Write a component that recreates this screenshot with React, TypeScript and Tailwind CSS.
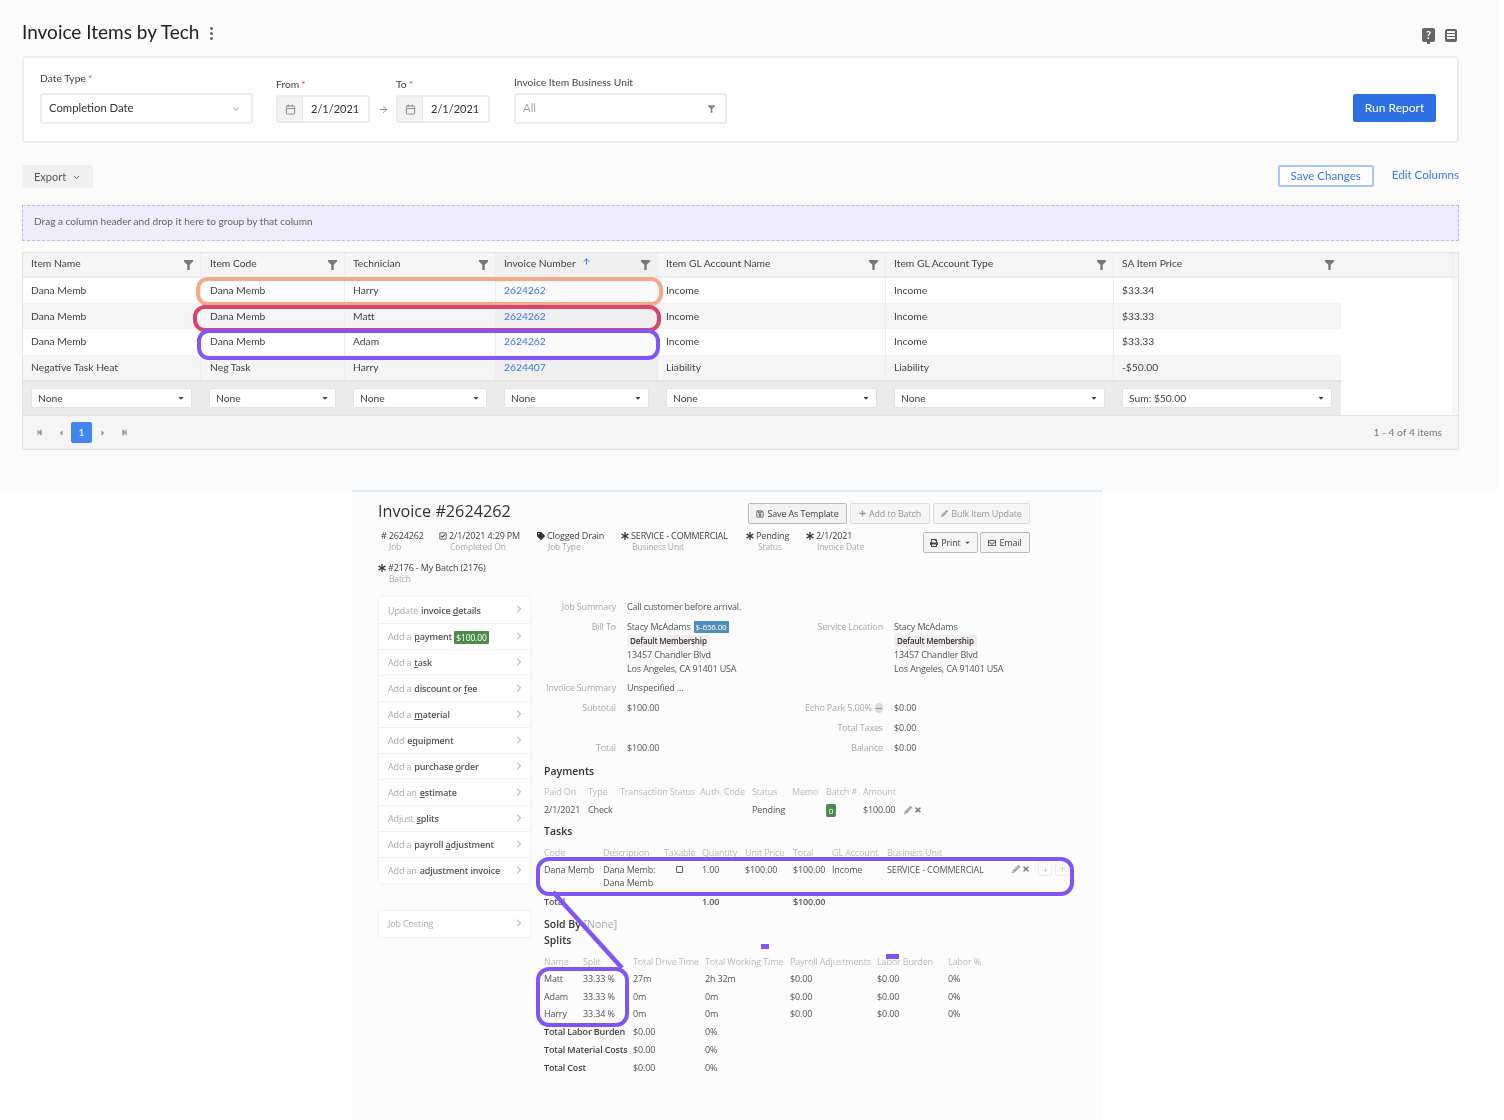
import { Calendar, ChevronDown, ChevronRight, ArrowRight, ArrowUp, ArrowDown } from 'lucide-react';
import {
  FaAsterisk,
  FaTag,
  FaRegCheckSquare,
  FaPrint,
  FaRegEnvelope,
  FaPencilAlt,
  FaTimes,
  FaRegSave,
  FaPlus,
  FaCaretDown,
  FaStepBackward,
  FaStepForward,
  FaCaretLeft,
  FaCaretRight,
} from 'react-icons/fa';
import type { ReactNode } from 'react';

const gridCols = 'grid grid-cols-[178px_144px_151px_162px_228px_228px_227px]';

const columns = [
  'Item Name',
  'Item Code',
  'Technician',
  'Invoice Number',
  'Item GL Account Name',
  'Item GL Account Type',
  'SA Item Price',
];

const rows = [
  ['Dana Memb', 'Dana Memb', 'Harry', '2624262', 'Income', 'Income', '$33.34'],
  ['Dana Memb', 'Dana Memb', 'Matt', '2624262', 'Income', 'Income', '$33.33'],
  ['Dana Memb', 'Dana Memb', 'Adam', '2624262', 'Income', 'Income', '$33.33'],
  ['Negative Task Heat', 'Neg Task', 'Harry', '2624407', 'Liability', 'Liability', '-$50.00'],
];

const footerSelects = ['None', 'None', 'None', 'None', 'None', 'None', 'Sum: $50.00'];

function FilterIcon({ className }: { className?: string }) {
  return (
    <svg viewBox="0 0 10 11" className={className} fill="currentColor">
      <path d="M0 0h10v1.6L6.3 5.2V11H3.7V5.2L0 1.6z" />
    </svg>
  );
}

function Req() {
  return <span className="text-[#e5484d] ml-[2px]">*</span>;
}

function DateField({ value }: { value: string }) {
  return (
    <div className="flex w-[94px] h-[28px] mb-[1px] bg-white border-2 border-[#ececec] rounded-[3px] text-[#333]">
      <div className="w-[25px] bg-[#f3f3f3] border-r border-[#e6e6e6] flex items-center justify-center">
        <Calendar className="w-[11px] h-[11px] text-[#888]" />
      </div>
      <div className="flex-1 flex items-center pl-[8px] text-[11px]">{value}</div>
    </div>
  );
}

function Grid() {
  return (
    <div className="mt-[11px] h-[198px] border border-[#e4e4e4] flex flex-col bg-white text-[10.3px] text-[#444] font-['Lato',sans-serif]">
      {/* Header */}
      <div className="flex h-[25px] bg-[#f5f5f5] border-b-2 border-[#ececec]">
        <div className={`${gridCols} w-[1318px]`}>
          {columns.map((c, i) => (
            <div
              key={c}
              className={`relative flex items-center pb-[1px] ${i === 1 ? 'pl-[9px]' : 'pl-[8px]'} ${i < 6 ? 'border-r border-[#ececec]' : ''} ${i === 3 ? 'bg-[#f0f0f0]' : ''}`}
            >
              {c}
              {i === 3 && <ArrowUp className="w-[9px] h-[9px] text-[#3b78e7] ml-[6px] mb-[4px]" strokeWidth={2.5} />}
              <FilterIcon className="absolute right-[7px] top-[7px] w-[9px] h-[10px] text-[#777]" />
            </div>
          ))}
        </div>
        <div className="flex-1 border-r border-[#ececec] mr-[5px]" />
      </div>

      <div className="flex flex-1">
        <div className="w-[1318px]">
          {rows.map((r, ri) => (
            <div key={ri} className={`${gridCols} h-[25.6px] ${ri % 2 === 1 ? 'bg-[#f5f5f5]' : 'bg-white'}`}>
              {r.map((v, i) => (
                <div
                  key={i}
                  className={`flex items-center ${i === 1 ? 'pl-[9px]' : 'pl-[8px]'} ${i < 6 ? 'border-r border-[#ededed]' : ''} ${i === 3 ? 'text-[#3b78e7]' : ''} ${
                    i === 3 ? (ri % 2 === 1 ? 'bg-[#efefef]' : 'bg-[#fafafa]') : ''
                  }`}
                >
                  {v}
                </div>
              ))}
            </div>
          ))}
          {/* Group footer */}
          <div className={`${gridCols} h-[35px] bg-[#ebebeb] border-t-2 border-[#e4e4e4]`}>
            {footerSelects.map((s, i) => (
              <div key={i} className="flex items-center pl-[8px] pr-[9px] pb-[1px]">
                <div className="flex-1 h-[20px] bg-white border border-[#e2e2e2] rounded-[2px] flex items-center justify-between px-[6px]">
                  {s}
                  <FaCaretDown className="w-[8px] h-[8px] text-[#444]" />
                </div>
              </div>
            ))}
          </div>
        </div>
        <div className="flex-1 bg-white" />
        <div className="w-[6px] bg-[#f7f7f7]" />
      </div>

      {/* Pager */}
      <div className="h-[34px] bg-[#f5f5f5] border-t border-[#e4e4e4] flex items-center pl-[13px] pr-[16px] text-[#777]">
        <FaStepBackward className="w-[7px] h-[7px] text-[#999]" />
        <FaCaretLeft className="w-[8px] h-[8px] text-[#999] ml-[14px]" />
        <div className="w-[21px] h-[21px] ml-[6px] rounded-[2px] bg-[#4285f0] text-white flex items-center justify-center">1</div>
        <FaCaretRight className="w-[8px] h-[8px] text-[#999] ml-[7px]" />
        <FaStepForward className="w-[7px] h-[7px] text-[#999] ml-[14px]" />
        <span className="ml-auto">1 - 4 of 4 items</span>
      </div>
    </div>
  );
}

function Meta({ icon, value, label, w, indent }: { icon: ReactNode; value: string; label: string; w: string; indent: string }) {
  return (
    <div className={w}>
      <div className="flex items-center gap-[2px] h-[11px] leading-[11px] whitespace-nowrap text-[#444]">
        {icon}
        {value}
      </div>
      <div className={`h-[11px] leading-[11px] text-[8.5px] text-[#aaa] whitespace-nowrap ${indent}`}>{label}</div>
    </div>
  );
}

const star = <FaAsterisk className="w-[8px] h-[8px] text-[#333]" />;

const actions: [string, ReactNode][] = [
  ['Update', <>invoice <u>d</u>etails</>],
  ['Add a', <><u>p</u>ayment</>],
  ['Add a', <><u>t</u>ask</>],
  ['Add a', <>discount or <u>f</u>ee</>],
  ['Add a', <><u>m</u>aterial</>],
  ['Add', <>e<u>q</u>uipment</>],
  ['Add a', <>purchase <u>o</u>rder</>],
  ['Add an', <><u>e</u>stimate</>],
  ['Adjust', <><u>s</u>plits</>],
  ['Add a', <>payroll <u>a</u>djustment</>],
  ['Add an', <>adjustment invoice</>],
];

function Sidebar() {
  return (
    <div className="w-[151px] shrink-0">
      <div className="bg-white rounded-[3px] shadow-[0_0_3px_rgba(0,0,0,0.12)]">
        {actions.map(([a, b], i) => (
          <div key={i} className={`h-[26px] flex items-center pl-[9px] pr-[5px] whitespace-nowrap ${i > 0 ? 'border-t border-[#f2f2f2]' : ''}`}>
            <span className="text-[#aaa] mr-[3px] pt-[1px]">{a}</span>
            <span className="text-[#555] font-semibold pt-[1px]">{b}</span>
            {i === 1 && (
              <span className="ml-[2px] mt-[1px] w-[35px] text-center h-[13px] leading-[13px] bg-[#4d8b4d] text-white text-[8.5px] rounded-[1px]">$100.00</span>
            )}
            <ChevronRight className="ml-auto w-[12px] h-[12px] text-[#999] mb-[2px]" strokeWidth={2} />
          </div>
        ))}
      </div>
      <div className="mt-[28px] h-[26px] bg-white rounded-[3px] shadow-[0_0_3px_rgba(0,0,0,0.12)] flex items-center pl-[9px] pr-[5px] text-[#aaa]">
        Job Costing
        <ChevronRight className="ml-auto w-[12px] h-[12px] text-[#999] mb-[2px]" strokeWidth={2} />
      </div>
    </div>
  );
}

function InfoRow({ label, value, label2, value2 }: { label?: string; value?: ReactNode; label2?: ReactNode; value2?: ReactNode }) {
  return (
    <div className="flex h-[20px] items-center whitespace-nowrap">
      <div className="w-[72px] text-right text-[#aaa]">{label}</div>
      <div className="w-[178px] ml-[11px] text-[#555]">{value}</div>
      <div className="w-[78px] flex justify-end items-center text-[#aaa]">{label2}</div>
      <div className="ml-[11px] text-[#555]">{value2}</div>
    </div>
  );
}

function MembershipBadge() {
  return <span className="inline-block h-[12px] leading-[12px] px-[3px] bg-[#f3eded] text-[#333] font-semibold text-[8px] rounded-[1px]">Default Membership</span>;
}

const paymentCols = 'grid grid-cols-[44px_32px_80px_52px_40px_34px_37px_40px_auto]';
const taskCols = 'grid grid-cols-[59px_61px_38px_43px_48px_39px_55px_125px_auto]';
const splitCols = 'grid grid-cols-[39px_50px_72px_85px_87px_71px_auto]';
const headingClass = 'h-[14px] leading-[14px] text-[10.5px] tracking-normal font-semibold text-[#333]';

const splitRows = [
  ['Matt', '33.33 %', '27m', '2h 32m', '$0.00', '$0.00', '0%'],
  ['Adam', '33.33 %', '0m', '0m', '$0.00', '$0.00', '0%'],
  ['Harry', '33.34 %', '0m', '0m', '$0.00', '$0.00', '0%'],
];

const totals = [
  ['Total Labor Burden', '$0.00', '0%'],
  ['Total Material Costs', '$0.00', '0%'],
  ['Total Cost', '$0.00', '0%'],
];

function Details() {
  return (
    <div className="ml-[14px] flex-1 text-[#555]">
      <InfoRow label="Job Summary" value="Call customer before arrival." />
      <div className="flex h-[61px] pt-[3px] leading-[14px] whitespace-nowrap">
        <div className="w-[72px] text-right text-[#aaa]">Bill To</div>
        <div className="w-[178px] ml-[11px]">
          <div className="flex items-center gap-[3px] h-[14px]">
            Stacy McAdams
            <span className="w-[35px] text-center h-[12px] leading-[12px] bg-[#4f8fba] text-white text-[8px] rounded-[1px]">$-656.00</span>
          </div>
          <div className="h-[14px] flex items-center"><MembershipBadge /></div>
          <div>13457 Chandler Blvd</div>
          <div>Los Angeles, CA 91401 USA</div>
        </div>
        <div className="w-[78px] text-right text-[#aaa]">Service Location</div>
        <div className="ml-[11px]">
          <div>Stacy McAdams</div>
          <div className="h-[14px] flex items-center"><MembershipBadge /></div>
          <div>13457 Chandler Blvd</div>
          <div>Los Angeles, CA 91401 USA</div>
        </div>
      </div>
      <InfoRow label="Invoice Summary" value="Unspecified ..." />
      <InfoRow
        label="Subtotal"
        value="$100.00"
        label2={
          <>
            Echo Park 5.00%
            <span className="ml-[3px] w-[10px] h-[10px] rounded-full bg-[#d5dde3] text-[#555] text-[7px] leading-[8px] text-center font-bold">...</span>
          </>
        }
        value2="$0.00"
      />
      <InfoRow label2="Total Taxes" value2="$0.00" />
      <InfoRow label="Total" value="$100.00" label2="Balance" value2="$0.00" />

      <div className={`mt-[6px] ${headingClass}`}>Payments</div>
      <div className={`${paymentCols} mt-[5px] h-[18px] items-center text-[#bbb] whitespace-nowrap`}>
        {['Paid On', 'Type', 'Transaction Status', 'Auth. Code', 'Status', 'Memo', 'Batch #', 'Amount'].map((c) => (
          <div key={c}>{c}</div>
        ))}
      </div>
      <div className={`${paymentCols} h-[18px] items-center whitespace-nowrap`}>
        <div>2/1/2021</div>
        <div>Check</div>
        <div />
        <div />
        <div>Pending</div>
        <div />
        <div>
          <span className="block w-[10px] h-[13px] leading-[13px] text-center bg-[#4d8b4d] text-white text-[8px] rounded-[2px]">0</span>
        </div>
        <div className="col-span-2 flex items-center">
          $100.00
          <FaPencilAlt className="w-[8px] h-[8px] text-[#999] ml-[9px]" />
          <FaTimes className="w-[8px] h-[8px] text-[#777] ml-[2px]" />
        </div>
      </div>

      <div className={`mt-[5px] ${headingClass}`}>Tasks</div>
      <div className={`${taskCols} mt-[6px] h-[18px] items-center text-[#bbb] whitespace-nowrap`}>
        {['Code', 'Description', 'Taxable', 'Quantity', 'Unit Price', 'Total', 'GL Account', 'Business Unit'].map((c) => (
          <div key={c}>{c}</div>
        ))}
      </div>
      <div className={`${taskCols} h-[31px] pt-[1px] leading-[13px] whitespace-nowrap`}>
        <div>Dana Memb</div>
        <div>Dana Memb:<br />Dana Memb</div>
        <div className="pl-[12px] pt-[3px]">
          <span className="block w-[7px] h-[7px] border border-[#666] rounded-[1px]" />
        </div>
        <div>1.00</div>
        <div>$100.00</div>
        <div>$100.00</div>
        <div>Income</div>
        <div>SERVICE - COMMERCIAL</div>
        <div className="flex items-start pt-[2px]">
          <FaPencilAlt className="w-[8px] h-[8px] text-[#999]" />
          <FaTimes className="w-[8px] h-[8px] text-[#777] ml-[2px]" />
          <span className="ml-[8px] -mt-[3px] w-[14px] h-[14px] border border-[#eee] rounded-[2px] flex items-center justify-center">
            <ArrowDown className="w-[7px] h-[7px] text-[#bbb]" />
          </span>
          <span className="ml-[3px] -mt-[3px] w-[14px] h-[14px] border border-[#eee] rounded-[2px] flex items-center justify-center">
            <ArrowUp className="w-[7px] h-[7px] text-[#bbb]" />
          </span>
        </div>
      </div>
      <div className={`${taskCols} h-[18px] items-center font-semibold`}>
        <div>Total</div>
        <div />
        <div />
        <div>1.00</div>
        <div />
        <div>$100.00</div>
      </div>

      <div className={`mt-[6px] ${headingClass}`}>
        Sold By <span className="font-normal text-[#aaa]">[None]</span>
      </div>
      <div className={`mt-[2px] ${headingClass}`}>Splits</div>
      <div className={`${splitCols} mt-[6px] h-[17px] items-center text-[#bbb] whitespace-nowrap`}>
        {['Name', 'Split', 'Total Drive Time', 'Total Working Time', 'Payroll Adjustments', 'Labor Burden', 'Labor %'].map((c) => (
          <div key={c}>{c}</div>
        ))}
      </div>
      {splitRows.map((r) => (
        <div key={r[0]} className={`${splitCols} h-[17.7px] items-center whitespace-nowrap`}>
          {r.map((v, i) => (
            <div key={i}>{v}</div>
          ))}
        </div>
      ))}
      {totals.map((r) => (
        <div key={r[0]} className="flex h-[17.7px] items-center whitespace-nowrap">
          <div className="w-[89px] font-semibold text-[#444]">{r[0]}</div>
          <div className="w-[72px]">{r[1]}</div>
          <div>{r[2]}</div>
        </div>
      ))}
    </div>
  );
}

function InvoicePanel() {
  return (
    <div className="w-[750px] h-[630px] ml-[352px] bg-[#fcfcfc] border-t-2 border-[#dcebf8] pl-[26px] pr-[72px] pt-[11px] font-['Open_Sans',sans-serif] text-[9px] tracking-[-0.15px]">
      <div className="flex items-center justify-between h-[21px]">
        <h1 className="text-[16.2px] tracking-normal font-medium text-[#333] mb-[5px]">Invoice #2624262</h1>
        <div className="flex gap-[3px]">
          <button className="w-[99px] h-[21px] flex items-center justify-center gap-[3px] border border-[#bbb] rounded-[2px] bg-[#f2f2f2] text-[#444]">
            <FaRegSave className="w-[8px] h-[8px]" /> Save As Template
          </button>
          <button className="w-[80px] h-[21px] flex items-center justify-center gap-[3px] border border-[#ddd] rounded-[2px] bg-[#f5f5f5] text-[#999]">
            <FaPlus className="w-[7px] h-[7px]" /> Add to Batch
          </button>
          <button className="w-[97px] h-[21px] flex items-center justify-center gap-[3px] border border-[#ddd] rounded-[2px] bg-[#f5f5f5] text-[#999]">
            <FaPencilAlt className="w-[7px] h-[7px]" /> Bulk Item Update
          </button>
        </div>
      </div>

      <div className="flex justify-between mt-[6px]">
        <div className="flex pl-[3px]">
          <Meta w="w-[58px]" indent="pl-[8px]" icon={<span className="text-[#333]">#</span>} value="2624262" label="Job" />
          <Meta w="w-[98px]" indent="pl-[11px]" icon={<FaRegCheckSquare className="w-[8px] h-[8px] text-[#333]" />} value="2/1/2021 4:29 PM" label="Completed On" />
          <Meta w="w-[84px]" indent="pl-[11px]" icon={<FaTag className="w-[8px] h-[8px] text-[#333]" />} value="Clogged Drain" label="Job Type" />
          <Meta w="w-[125px]" indent="pl-[11px]" icon={star} value="SERVICE - COMMERCIAL" label="Business Unit" />
          <Meta w="w-[60px]" indent="pl-[12px]" icon={star} value="Pending" label="Status" />
          <Meta w="w-[60px]" indent="pl-[11px]" icon={star} value="2/1/2021" label="Invoice Date" />
        </div>
        <div className="flex gap-[2px] mt-[2px] text-[#444]">
          <button className="w-[55px] h-[21px] flex items-center justify-center gap-[3px] border border-[#bbb] rounded-[2px] bg-[#f5f5f5]">
            <FaPrint className="w-[8px] h-[8px]" /> Print
            <FaCaretDown className="w-[7px] h-[7px]" />
          </button>
          <button className="w-[50px] h-[21px] flex items-center justify-center gap-[3px] border border-[#bbb] rounded-[2px] bg-[#f5f5f5]">
            <FaRegEnvelope className="w-[8px] h-[8px]" /> Email
          </button>
        </div>
      </div>

      <div className="mt-[9px]">
        <Meta w="w-[150px]" indent="pl-[11px]" icon={star} value="#2176 - My Batch (2176)" label="Batch" />
      </div>

      <div className="flex mt-[13px] pl-[1px]">
        <Sidebar />
        <Details />
      </div>
    </div>
  );
}

export default function App() {
  return (
    <div className="relative w-[1504px] h-[1120px] bg-white overflow-hidden blur-[0.4px]">
      {/* Report */}
      <div className="w-[1499px] h-[490px] bg-[#fbfbfc] pl-[22px] pr-[40px] font-['Lato',sans-serif]">
        <div className="h-[54px] pt-[10px] mb-[2px] flex items-center">
          <h1 className="text-[19px] text-[#222]">Invoice Items by Tech</h1>
          <div className="ml-[11px] flex flex-col gap-[2px] mt-[2px]">
            <span className="w-[3px] h-[3px] rounded-full bg-[#666]" />
            <span className="w-[3px] h-[3px] rounded-full bg-[#666]" />
            <span className="w-[3px] h-[3px] rounded-full bg-[#666]" />
          </div>
          <div className="ml-auto flex items-center gap-[10px] mr-[2px] mt-[6px]">
            <span className="relative w-[13px] h-[14px] bg-[#666] rounded-[2px] text-white text-[11px] font-bold leading-[14px] text-center">
              ?
              <span className="absolute left-[5px] -bottom-[2px] w-[3px] h-[3px] bg-[#666]" />
            </span>
            <span className="w-[12px] h-[13px] bg-[#666] rounded-[2px] flex flex-col items-center justify-center gap-[1px]">
              <span className="w-[8px] h-[2px] bg-white" />
              <span className="w-[8px] h-[2px] bg-white" />
              <span className="w-[8px] h-[2px] bg-white" />
            </span>
          </div>
        </div>

        {/* Filters */}
        <div className="h-[87px] bg-white border-2 border-[#eeeeee] rounded-[4px] pl-[16px] pr-[21px] pb-[17px] flex items-end text-[10.3px] text-[#444]">
          <div className="w-[213px]">
            <div className="mb-[7px]">Date Type<Req /></div>
            <div className="h-[31px] border-2 border-[#ececec] rounded-[3px] flex items-center justify-between pl-[7px] pr-[10px] text-[11.3px] text-[#333]">
              Completion Date
              <ChevronDown className="w-[10px] h-[10px] text-[#888]" />
            </div>
          </div>
          <div className="ml-[23px]">
            <div className="mb-[3px]">From<Req /></div>
            <DateField value="2/1/2021" />
          </div>
          <div className="w-[26px] h-[29px] flex items-center justify-center">
            <ArrowRight className="w-[11px] h-[11px] text-[#888]" />
          </div>
          <div>
            <div className="mb-[3px]">To<Req /></div>
            <DateField value="2/1/2021" />
          </div>
          <div className="ml-[24px] w-[213px]">
            <div className="mb-[3px]">Invoice Item Business Unit</div>
            <div className="h-[31px] border-2 border-[#ececec] rounded-[3px] flex items-center justify-between pl-[7px] pr-[10px] text-[11.3px] text-[#aaa]">
              All
              <FilterIcon className="w-[7px] h-[8px] text-[#888]" />
            </div>
          </div>
          <button className="ml-auto mb-[2px] w-[83px] h-[28px] bg-[#2f6fe4] rounded-[2px] text-white text-[12px]">Run Report</button>
        </div>

        {/* Toolbar */}
        <div className="mt-[22px] h-[23px] flex items-center text-[11.6px]">
          <button className="w-[71px] h-[23px] bg-[#f0f0f0] rounded-[2px] text-[#555] text-[11px] flex items-center justify-center gap-[6px] pt-[1px]">
            Export <ChevronDown className="w-[9px] h-[9px]" strokeWidth={2.5} />
          </button>
          <button className="ml-auto w-[96px] h-[22px] bg-white border-2 border-[#aac6f6] rounded-[2px] text-[#3b78e7] pb-[1px] mb-[1px]">Save Changes</button>
          <span className="ml-[18px] text-[#3b78e7] mb-[3px]">Edit Columns</span>
        </div>

        <div className="mt-[17px] h-[36px] bg-[#efecfd] border border-dashed border-[#c4b6f2] flex items-center pl-[11px] pb-[2px] text-[10.1px] text-[#666]">
          Drag a column header and drop it here to group by that column
        </div>

        <Grid />
      </div>

      <InvoicePanel />

      {/* Highlights drawn over the report */}
      <div className="absolute left-[196px] top-[277px] w-[467px] h-[29px] border-[4px] border-[#f4a988] rounded-[12px]" />
      <div className="absolute left-[193px] top-[305px] w-[468px] h-[27px] border-[4px] border-[#d6456f] rounded-[12px]" />
      <div className="absolute left-[197px] top-[329px] w-[463px] h-[31px] border-[4px] border-[#7f56f5] rounded-[12px]" />
      <div className="absolute left-[536px] top-[857px] w-[538px] h-[39px] border-[4px] border-[#7f56f5] rounded-[13px]" />
      <div className="absolute left-[536px] top-[967px] w-[93px] h-[60px] border-[4px] border-[#7f56f5] rounded-[13px]" />
      <div className="absolute left-[761px] top-[944px] w-[8px] h-[5px] bg-[#7f56f5]" />
      <div className="absolute left-[886px] top-[954px] w-[13px] h-[5px] bg-[#7f56f5]" />
      <svg className="absolute left-[540px] top-[885px] w-[100px] h-[95px]" viewBox="0 0 100 95">
        <line x1="13" y1="7" x2="82" y2="83" stroke="#7f56f5" strokeWidth="4.5" />
      </svg>
    </div>
  );
}
